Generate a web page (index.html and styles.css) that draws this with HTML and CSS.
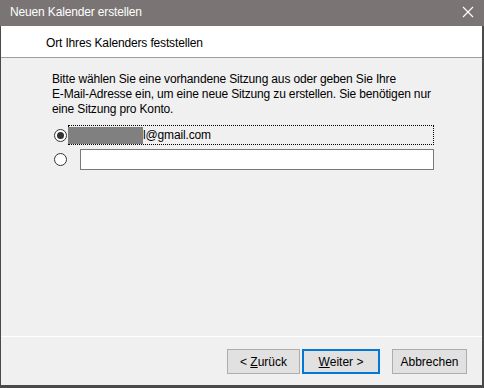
FILE: index.html
```html
<!DOCTYPE html>
<html lang="de">
<head>
    <meta charset="UTF-8">
    <title>Neuen Kalender erstellen</title>
    <link rel="stylesheet" href="styles.css">
</head>
<body>
    <div class="window">
        <div class="titlebar">
            <span class="title">Neuen Kalender erstellen</span>
            <svg class="close" width="12" height="12" viewBox="0 0 12 12">
                <path d="M1 1 L11 11 M11 1 L1 11" stroke="#fff" stroke-width="1.1" fill="none"/>
            </svg>
        </div>
        <div class="frame">
            <div class="header">Ort Ihres Kalenders feststellen</div>
            <div class="content">
                <p class="intro">Bitte wählen Sie eine vorhandene Sitzung aus oder geben Sie Ihre<br>E-Mail-Adresse ein, um eine neue Sitzung zu erstellen. Sie benötigen nur<br>eine Sitzung pro Konto.</p>
                <div class="choice">
                    <span class="radio checked"></span>
                    <span class="session"><span class="redacted"></span>l@gmail.com</span>
                </div>
                <div class="choice">
                    <span class="radio"></span>
                    <input type="text" class="mail-input">
                </div>
            </div>
            <div class="footer">
                <button class="btn back">&lt; <u>Z</u>urück</button>
                <button class="btn next"><u>W</u>eiter &gt;</button>
                <button class="btn cancel">Abbrechen</button>
            </div>
        </div>
    </div>
</body>
</html>
```

FILE: styles.css
```css
body {
    margin: 0;
    padding: 0;
    font-family: "Liberation Sans", Arial, sans-serif;
    font-size: 12px;
    letter-spacing: -0.15px;
    color: #000;
    background-color: #f0f0f0;
}
.window {
    width: 484px;
    height: 388px;
    display: flex;
    flex-direction: column;
}
.titlebar {
    height: 26px;
    flex: none;
    display: flex;
    align-items: center;
    justify-content: space-between;
    background-color: #7a7574;
    color: #fff;
    padding: 0 10px 2px 10px;
    box-sizing: border-box;
}
.title {
    font-size: 12px;
}
.frame {
    flex: 1;
    display: flex;
    flex-direction: column;
    border-left: 1px solid #4a4a4a;
    border-right: 2px solid #4a4a4a;
    border-bottom: 3px solid #4a4a4a;
    background-color: #f0f0f0;
}
.header {
    height: 32px;
    flex: none;
    box-sizing: border-box;
    background-color: #fff;
    border-bottom: 1px solid #a0a0a0;
    padding: 10px 0 0 45px;
}
.content {
    flex: 1;
    padding: 14px 0 0 51px;
}
.intro {
    margin: 0 0 8px 0;
    line-height: 15px;
}
.choice {
    display: flex;
    align-items: center;
    padding-left: 2px;
    margin-bottom: 4px;
}
.radio {
    width: 13px;
    height: 13px;
    box-sizing: border-box;
    border: 1px solid #333;
    border-radius: 50%;
    background-color: #fff;
    display: flex;
    align-items: center;
    justify-content: center;
    flex: none;
}
.radio.checked::after {
    content: "";
    width: 7px;
    height: 7px;
    border-radius: 50%;
    background-color: #333;
}
.session {
    margin-left: 1px;
    width: 366px;
    height: 20px;
    box-sizing: border-box;
    border: 1px dotted #000;
    display: flex;
    align-items: center;
}
.redacted {
    width: 75px;
    height: 17px;
    margin: 1px 0 0 -1px;
    background-color: #808080;
}
.mail-input {
    margin-left: 13px;
    width: 354px;
    height: 21px;
    box-sizing: border-box;
    border: 1px solid #7a7a7a;
    background-color: #fff;
    padding: 0 4px;
    font: inherit;
    outline: none;
}
.footer {
    height: 49px;
    flex: none;
    box-sizing: border-box;
    border-top: 1px solid #fff;
    display: flex;
    justify-content: flex-end;
    padding: 12px 15px 0 0;
    gap: 2px;
}
.btn {
    height: 25px;
    box-sizing: border-box;
    background-color: #e1e1e1;
    border: 1px solid #adadad;
    font: inherit;
    color: #000;
    padding: 0;
}
.btn.back {
    width: 73px;
}
.btn.next {
    width: 78px;
    border: 2px solid #0078d7;
}
.btn.cancel {
    width: 75px;
    margin-left: 10px;
}
```
